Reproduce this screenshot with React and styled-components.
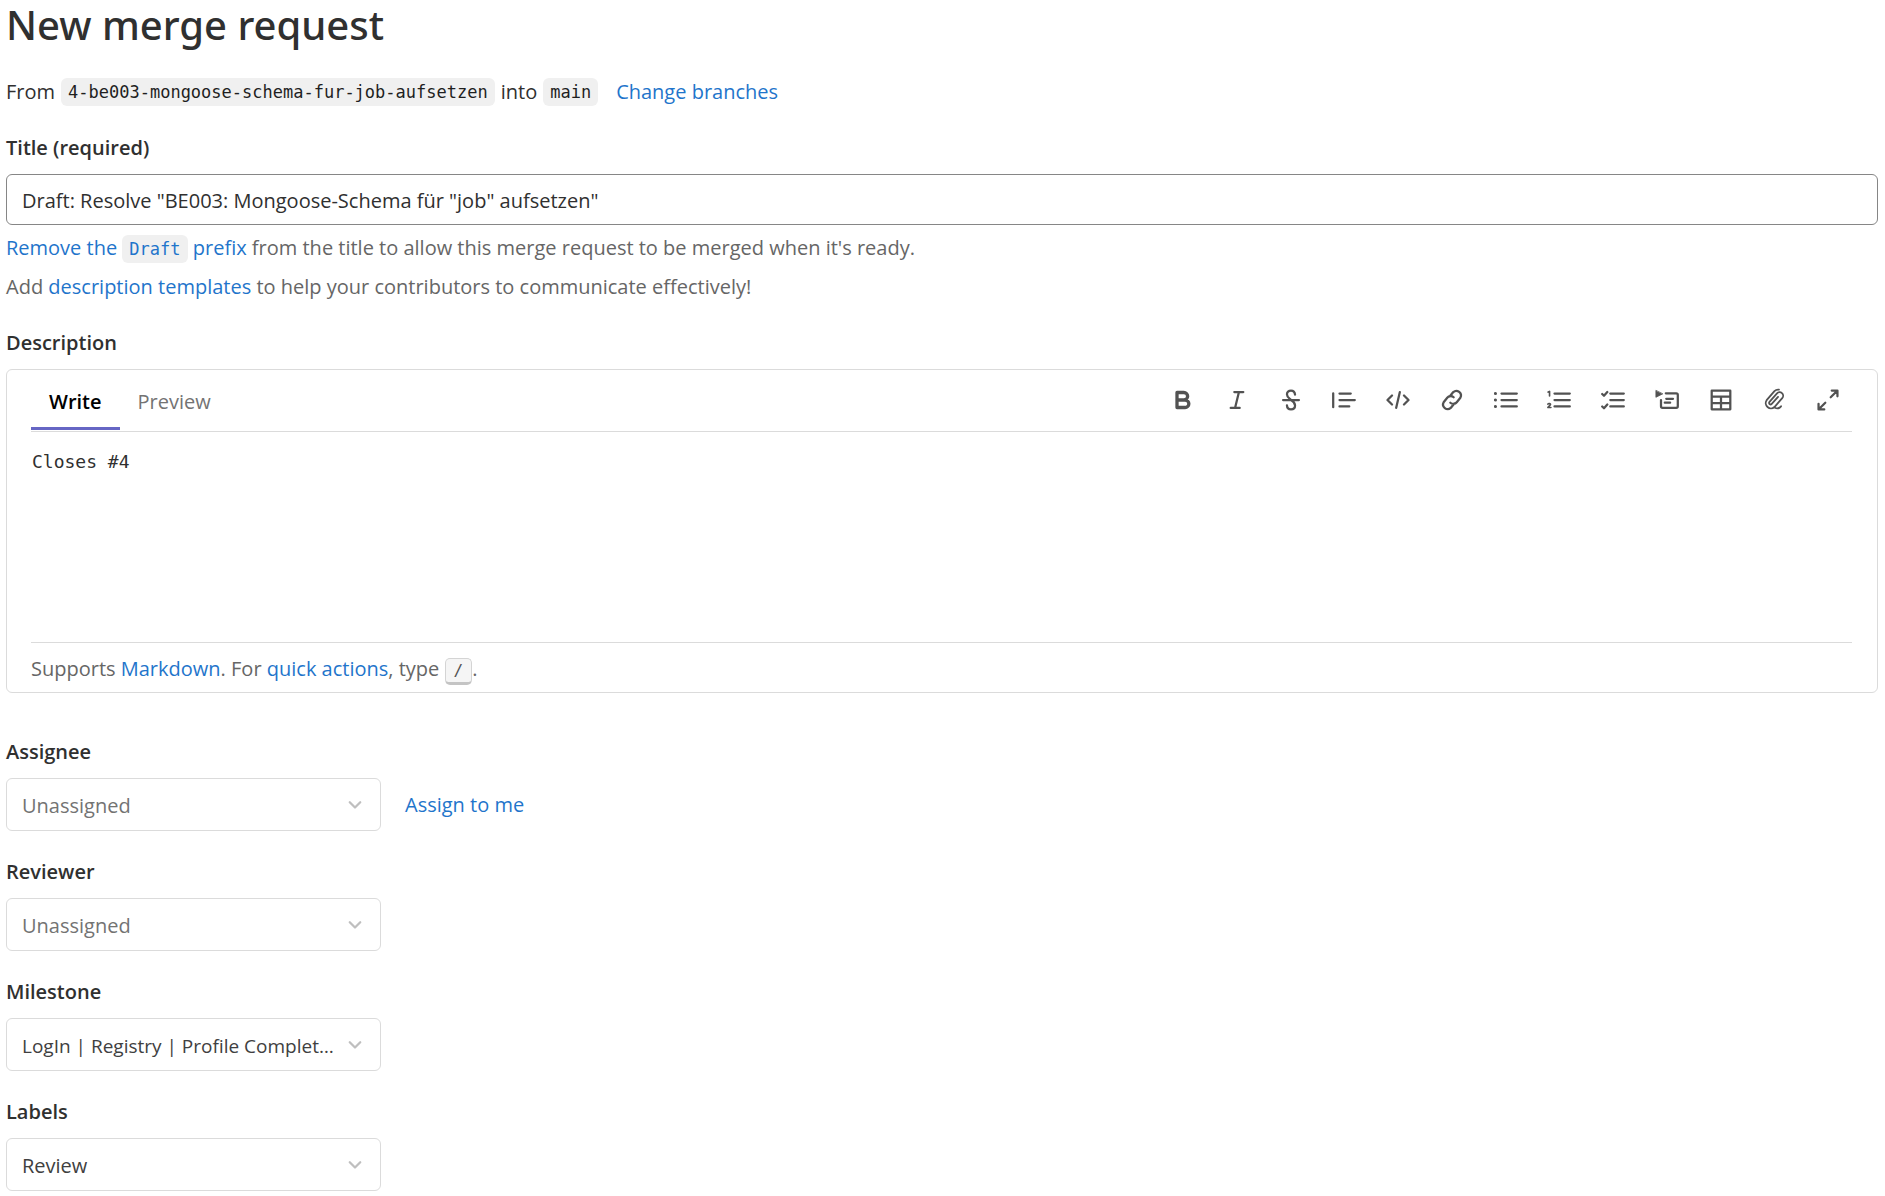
import React, { useState } from "react";
import styled, { createGlobalStyle } from "styled-components";

const SANS = '"Open Sans", "Noto Sans", sans-serif';
const HEADING = '"Noto Sans", "Open Sans", sans-serif';
const MONO = '"DejaVu Sans Mono", "Liberation Mono", monospace';

const GlobalStyle = createGlobalStyle`
  *, *::before, *::after { box-sizing: border-box; }
  body {
    margin: 0;
    background: #fff;
    color: #303030;
    font-family: ${SANS};
    font-size: 20px;
    line-height: 30px;
  }
`;

const Page = styled.main`
  padding: 0 7px 5px 6px;
`;

const PageTitle = styled.h1`
  margin: 0;
  font-family: ${HEADING};
  font-size: 40px;
  line-height: 50px;
  font-weight: 500;
`;

const Branches = styled.p`
  display: flex;
  align-items: center;
  gap: 6px;
  margin: 27px 0 0;
`;

const Code = styled.code`
  display: inline-block;
  padding: 0 7px;
  border-radius: 6px;
  background: #f0f0f0;
  color: ${(p) => (p.$link ? "inherit" : "#1f1f1f")};
  font-family: ${MONO};
  font-size: 17px;
  line-height: 28px;
`;

const Link = styled.a`
  color: #1f75cb;
  text-decoration: none;
  margin-left: ${(p) => (p.$spaced ? "12px" : "0")};
`;

const Field = styled.div`
  display: flex;
  flex-direction: column;
  gap: 11px;
  margin-top: ${(p) => p.$top || 26}px;
`;

const Label = styled.label`
  align-self: flex-start;
  font-weight: 600;
  font-size: 20px;
  line-height: 30px;
`;

const TitleInput = styled.input`
  width: 100%;
  height: 51px;
  padding: 2px 15px 0;
  border: 1px solid #868686;
  border-radius: 6px;
  background: #fff;
  color: #303030;
  font-family: inherit;
  font-size: 20px;
`;

const Hints = styled.div`
  display: flex;
  flex-direction: column;
  gap: 9px;
  margin-top: 8px;
  color: #666;
`;

const Hint = styled.p`
  margin: 0;
`;

const Editor = styled.div`
  border: 1px solid #dbdbdb;
  border-radius: 6px;
  padding: 0 25px 0 24px;
`;

const EditorHeader = styled.div`
  display: flex;
  justify-content: space-between;
  align-items: center;
  height: 62px;
  border-bottom: 1px solid #dbdbdb;
`;

const Tabs = styled.div`
  display: flex;
  align-self: stretch;
  padding: 1px 0;
`;

const Tab = styled.button`
  padding: 4px 18px 0;
  border: 0;
  border-bottom: 3px solid ${(p) => (p.$active ? "#6666c4" : "transparent")};
  background: none;
  color: ${(p) => (p.$active ? "#000" : "#737373")};
  font-family: inherit;
  font-size: 20px;
  font-weight: ${(p) => (p.$active ? 600 : 400)};
  cursor: pointer;
`;

const Toolbar = styled.div`
  display: flex;
  flex: 0 1 687px;
  justify-content: space-between;
  padding: 0 6px 2px 0;
`;

const Tool = styled.button`
  display: grid;
  place-items: center;
  width: 36px;
  height: 36px;
  padding: 0;
  border: 0;
  border-radius: 6px;
  background: none;
  color: #525252;
  cursor: pointer;
`;

const IconSvg = styled.svg`
  display: block;
  fill: none;
  stroke: currentColor;
  stroke-width: 1.5;
  stroke-linecap: round;
  stroke-linejoin: round;
`;

const Textarea = styled.textarea`
  display: block;
  width: 100%;
  height: 210px;
  padding: 15px 1px;
  border: 0;
  outline: 0;
  resize: none;
  background: transparent;
  color: #303030;
  font-family: ${MONO};
  font-size: 18px;
  line-height: 30px;
`;

const EditorFooter = styled.div`
  padding: 11px 0 7px;
  border-top: 1px solid #dbdbdb;
  color: #666;
`;

const Kbd = styled.kbd`
  display: inline-block;
  padding: 0 8px;
  border: 1px solid #d4d4d4;
  border-bottom: 3px solid #c4c4c4;
  border-radius: 5px;
  background: #f5f5f5;
  color: #525252;
  font-family: ${MONO};
  font-size: 16px;
  line-height: 23px;
`;

const Controls = styled.div`
  display: flex;
  align-items: center;
  gap: 24px;
`;

const SelectBox = styled.div`
  display: grid;
  align-items: center;
  width: 375px;
  color: #bfbfbf;

  & > * { grid-area: 1 / 1; }
  & > svg { justify-self: end; margin-right: 14px; pointer-events: none; }
`;

const Select = styled.select`
  appearance: none;
  width: 100%;
  height: 53px;
  padding: 2px 44px 0 15px;
  border: 1px solid #dbdbdb;
  border-radius: 6px;
  background: #fff;
  color: ${(p) => (p.$muted ? "#737373" : "#404040")};
  font-family: inherit;
  font-size: ${(p) => (p.$dense ? 19 : 20)}px;
  text-overflow: ellipsis;
`;

const Icon = ({ children }) => (
  <IconSvg width="24" height="24" viewBox="0 0 16 16" aria-hidden="true">
    {children}
  </IconSvg>
);

const tools = [
  ["Bold", <path d="M4 3v10h5.400a2.500 2.500 0 0 0 0-5H4h4.600a2.500 2.500 0 0 0 0-5z" strokeWidth="2.200" />],
  ["Italic", <path d="M6.200 2.700h6M3.800 13.300h6M9.300 2.700L6.700 13.300" />],
  ["Strikethrough", <path d="M2.700 8h10.600M10.700 4.400C10.500 2.600 9.400 1.700 8 1.700c-1.600 0-2.700 1-2.700 2.400C5.300 6.400 7.500 7.200 8 8c1 .6 2.700 1.600 2.700 3.700 0 1.600-1.100 2.600-2.700 2.600-1.500 0-2.600-1-2.700-2.700" />],
  ["Quote", <path d="M.8 3.500v9.300M5 3.700h7.500M5 8h10.200M5 12.300h6.500" />],
  ["Code", <path d="M4 5L1 8l3 3M12 5l3 3-3 3M9.200 2.800L6.800 13.200" />],
  ["Link", <path d="M6.700 5.500l2.700-2.700a3.100 3.100 0 0 1 4.300 4.300L11 9.800a3 3 0 0 1-4.300-.1M9.300 10.500l-2.700 2.700a3.100 3.100 0 0 1-4.300-4.300L5 6.200a3 3 0 0 1 4.300.1" transform="rotate(-6 8 8)" />],
  ["Bullet list", <><path d="M5 3.700h10.200M5 8h10.200M5 12.300h10.200" /><path d="M.9 3.700h.1M.9 8h.1M.9 12.300h.1" strokeWidth="2" /></>],
  ["Numbered list", <><path d="M5 3.700h10.200M5 8h10.200M5 12.300h10.200" /><path d="M.8 2.700l.9-.4v3M.6 10.800c.3-.6 1.900-.6 1.700.3-.1.600-1.300 1-1.700 1.900h2" strokeWidth="1.100" /></>],
  ["Checklist", <path d="M6.200 3.700h9M6.200 8h9M6.200 12.300h9M.8 4l1.200 1.200L4.200 2.700M.8 12.300L2 13.500 4.200 11" />],
  ["Collapsible section", <><path d="M.6 1.800v4.400L5 4z" fill="currentColor" strokeWidth=".5" /><path d="M7.200 3.500h7a1 1 0 0 1 1 1v7.700a1 1 0 0 1-1 1H5a1 1 0 0 1-1-1V8M7.500 7.200H12M6.500 9.800h3.600" /></>],
  ["Table", <path d="M1.800 1.800h12.400v12.400H1.800zM1.800 5.700h12.400M1.800 10h12.400M8 5.700v8.500" />],
  ["Attach file", <path d="M10.300 5.900l-4.200 4.700a1 1 0 0 1-1.500-1.400l5-5.600a2.300 2.300 0 0 1 3.500 3.100l-5.200 6a3.500 3.500 0 0 1-5.200-4.600l5.200-6a3.500 3.500 0 0 1 3-1M8.300 13.200c1.400.8 2.900.3 4-1" transform="translate(.4 0)" strokeWidth="1.200" />],
  ["Full screen", <path d="M10.500 1.700h3.800v3.800M14 2L9.800 6.200M5.500 14.300H1.700v-3.800M2 14l4.200-4.200" />],
];

const Dropdown = ({ id, label, value, muted, dense, top, children }) => (
  <Field $top={top}>
    <Label htmlFor={id}>{label}</Label>
    <Controls>
      <SelectBox>
        <Select id={id} $muted={muted} $dense={dense} defaultValue={value}>
          <option>{value}</option>
        </Select>
        <Icon>
          <path d="M4.500 6.200L8 9.700l3.500-3.500" />
        </Icon>
      </SelectBox>
      {children}
    </Controls>
  </Field>
);

export default function App() {
  const [tab, setTab] = useState("Write");
  return (
    <>
      <GlobalStyle />
      <Page>
        <PageTitle>New merge request</PageTitle>
        <Branches>
          <span>From</span>
          <Code>4-be003-mongoose-schema-fur-job-aufsetzen</Code>
          <span>into</span>
          <Code>main</Code>
          <Link href="#branches" $spaced>Change branches</Link>
        </Branches>

        <Field>
          <Label htmlFor="title">Title (required)</Label>
          <TitleInput id="title" defaultValue={'Draft: Resolve "BE003: Mongoose-Schema für "job" aufsetzen"'} />
        </Field>
        <Hints>
          <Hint>
            <Link href="#draft">Remove the <Code $link>Draft</Code> prefix</Link> from the title to allow this merge request to be merged when it's ready.
          </Hint>
          <Hint>
            Add <Link href="#templates">description templates</Link> to help your contributors to communicate effectively!
          </Hint>
        </Hints>

        <Field>
          <Label htmlFor="description">Description</Label>
          <Editor>
            <EditorHeader>
              <Tabs role="tablist">
                {["Write", "Preview"].map((name) => (
                  <Tab key={name} type="button" role="tab" aria-selected={tab === name} $active={tab === name} onClick={() => setTab(name)}>
                    {name}
                  </Tab>
                ))}
              </Tabs>
              <Toolbar>
                {tools.map(([name, drawing]) => (
                  <Tool key={name} type="button" aria-label={name}>
                    <Icon>{drawing}</Icon>
                  </Tool>
                ))}
              </Toolbar>
            </EditorHeader>
            <Textarea id="description" defaultValue="Closes #4" />
            <EditorFooter>
              Supports <Link href="#markdown">Markdown</Link>. For <Link href="#actions">quick actions</Link>, type <Kbd>/</Kbd>.
            </EditorFooter>
          </Editor>
        </Field>

        <Dropdown id="assignee" label="Assignee" value="Unassigned" muted top={44}>
          <Link href="#assign">Assign to me</Link>
        </Dropdown>
        <Dropdown id="reviewer" label="Reviewer" value="Unassigned" muted />
        <Dropdown id="milestone" label="Milestone" value="LogIn | Registry | Profile Completion" dense />
        <Dropdown id="labels" label="Labels" value="Review" />
      </Page>
    </>
  );
}
